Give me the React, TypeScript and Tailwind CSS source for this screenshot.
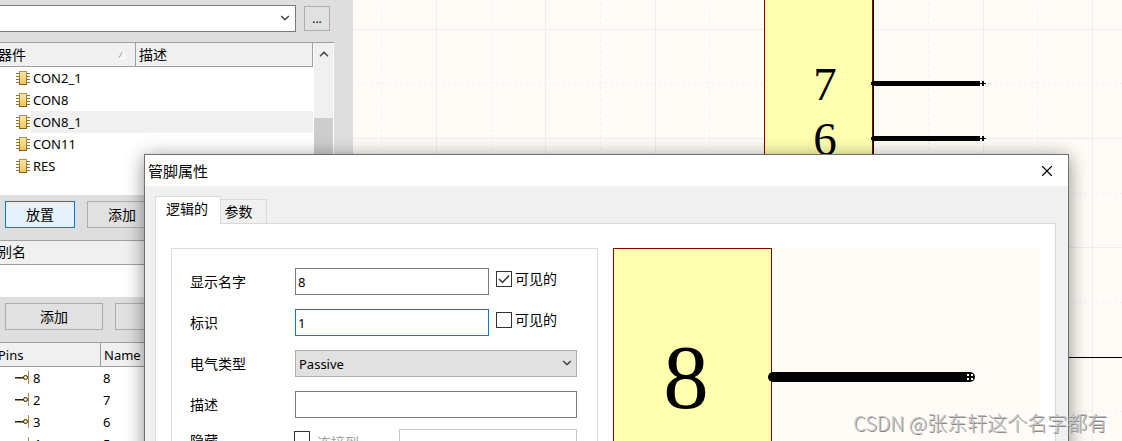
import { ChevronDown, ChevronUp, X } from "lucide-react"
import { ReactNode } from "react"

const components = ["CON2_1", "CON8", "CON8_1", "CON11", "RES"]

const pins = [
  { id: "8", name: "8" },
  { id: "2", name: "7" },
  { id: "3", name: "6" },
  { id: "4", name: "5" },
]

const solidX = [83, 192, 302, 411, 520, 630, 739]
const dashedX = [28, 138, 247, 356, 466, 575, 684]
const solidY = [29, 138, 247]
const dashedY = [83, 193, 302, 411]

function ChipIcon() {
  return (
    <svg width="14" height="14" viewBox="0 0 14 14" shapeRendering="crispEdges">
      <defs>
        <linearGradient id="chip" x1="0" y1="0" x2="0" y2="1">
          <stop offset="0" stopColor="#fbe5a9" />
          <stop offset="1" stopColor="#f3c65c" />
        </linearGradient>
        <linearGradient id="chipEdge" x1="0" y1="0" x2="0" y2="1">
          <stop offset="0" stopColor="#b0973a" />
          <stop offset="1" stopColor="#7f5f1c" />
        </linearGradient>
      </defs>
      {[2, 5, 8, 11].map((y) => (
        <path key={y} d={`M0 ${y}h3v1h-3zM11 ${y}h3v1h-3z`} fill="#8f7526" />
      ))}
      <rect x="3" y="0" width="8" height="14" fill="url(#chipEdge)" />
      <rect x="4" y="1" width="6" height="12" fill="url(#chip)" />
    </svg>
  )
}

function PinIcon() {
  return (
    <svg width="14" height="14" viewBox="0 0 14 14">
      <rect x="0" y="6" width="9" height="1" fill="#2b2118" />
      <rect x="0" y="7" width="9" height="1" fill="#a08a60" />
      <rect x="13" y="0" width="1" height="13" fill="#a58a48" />
      <circle cx="10.5" cy="6.5" r="2" fill="#ffe98a" stroke="#2b2118" />
    </svg>
  )
}

function PushButton({ children, className }: { children?: ReactNode; className: string }) {
  return (
    <button type="button" className={`h-[27px] shrink-0 border text-sm leading-5 ${className}`}>
      {children}
    </button>
  )
}

function CheckBox({ id, checked = false }: { id: string; checked?: boolean }) {
  return (
    <span className="relative size-4">
      <input
        id={id}
        type="checkbox"
        defaultChecked={checked}
        className="peer block size-4 appearance-none border border-[#333] bg-white"
      />
      <svg className="pointer-events-none absolute inset-0 hidden peer-checked:block" viewBox="0 0 16 16">
        <path d="M3 8l3.500 3.500L13 4.500" fill="none" stroke="#333" strokeWidth="1.500" />
      </svg>
    </span>
  )
}

function VisibleToggle({ id, checked }: { id: string; checked?: boolean }) {
  return (
    <div className="flex items-center gap-[3px] self-start pt-[3px]">
      <CheckBox id={id} checked={checked} />
      <label htmlFor={id} className="leading-4">可见的</label>
    </div>
  )
}

function Sidebar() {
  const th = "border-b border-[#a0a0a0] bg-[#f0f0f0] p-0 text-left font-normal"
  return (
    <aside className="w-[353px] shrink-0 bg-[#dedede] pt-[5px]">
      <div className="flex items-center gap-2">
        <div className="relative h-[27px] w-[296px]">
          <select aria-label="库" className="size-full appearance-none border border-l-0 border-[#7a7a7a] bg-white" />
          <ChevronDown className="pointer-events-none absolute top-1.5 right-1 size-3.5 text-[#333]" strokeWidth={2} />
        </div>
        <button type="button" className="h-[25px] w-[26px] border border-[#adadad] bg-[#e1e1e1] text-xs">
          ...
        </button>
      </div>

      {/* Component list */}
      <div className="mt-[10px] flex h-[153px] w-[334px] border-t border-[#a0a0a0] bg-white">
        <div className="flex-1">
          <table className="-ml-0.5 w-[315px] table-fixed border-separate border-spacing-0">
            <thead>
              <tr className="h-6">
                <th className={`w-[138px] border-r ${th}`}>
                  <div className="flex items-center justify-between pr-2">
                    器件
                    <svg width="9" height="8" viewBox="0 0 9 8">
                      <path d="M.5 7.500L4.500 .5" stroke="#a0a0a0" />
                      <path d="M4.500.5L8 7.500H0" fill="none" stroke="#fff" />
                    </svg>
                  </div>
                </th>
                <th className={`border-r ${th}`}>
                  <span className="pl-[3px]">描述</span>
                </th>
              </tr>
            </thead>
            <tbody>
              {components.map((name) => (
                <tr key={name} className="h-[22px] text-[13px]">
                  <td colSpan={2} className="p-0 pl-[18px]">
                    <div className="flex items-center gap-[1px]">
                      <ChipIcon />
                      <span className={`h-[22px] flex-1 pl-0.5 ${name === "CON8_1" ? "bg-[#f0f0f0]" : ""}`}>{name}</span>
                    </div>
                  </td>
                </tr>
              ))}
            </tbody>
          </table>
        </div>
        <div className="mr-px flex w-[19px] flex-col items-center bg-[#f0f0f0]">
          <ChevronUp className="my-1 size-3.5 text-[#505050]" strokeWidth={3} />
          <div className="mt-[53px] w-full flex-1 bg-[#cdcdcd]" />
        </div>
      </div>

      <div className="flex gap-3 px-[5px] pt-1.5 pb-3">
        <PushButton className="w-[70px] border-[#0078d7] bg-[#e5f1fb]">放置</PushButton>
        <PushButton className="w-[70px] border-[#adadad] bg-[#e1e1e1]">添加</PushButton>
      </div>

      {/* Aliases */}
      <div className="h-[57px] w-[334px] border-t border-[#a0a0a0] bg-white">
        <div className="h-6 border-b border-[#a0a0a0] bg-[#f0f0f0]">
          <h2 className="-ml-0.5">别名</h2>
        </div>
      </div>

      <div className="flex gap-3 px-[5px] pt-1.5 pb-3">
        <PushButton className="w-[98px] border-[#adadad] bg-[#e1e1e1]">添加</PushButton>
        <PushButton className="w-[98px] border-[#adadad] bg-[#e1e1e1]" />
      </div>

      {/* Pins */}
      <div className="h-[120px] w-[334px] border-t border-[#a0a0a0] bg-white">
        <table className="-ml-0.5 w-[336px] table-fixed border-separate border-spacing-0 text-[13px]">
          <thead>
            <tr className="h-6">
              <th className={`w-[103px] border-r ${th}`}>Pins</th>
              <th className={th}>
                <span className="pl-[3px]">Name</span>
              </th>
            </tr>
          </thead>
          <tbody>
            {pins.map((pin) => (
              <tr key={pin.id} className="h-[22px]">
                <td className="p-0 pl-[17px]">
                  <div className="flex items-center gap-1">
                    <PinIcon />
                    {pin.id}
                  </div>
                </td>
                <td className="p-0 pl-0.5">{pin.name}</td>
              </tr>
            ))}
          </tbody>
        </table>
      </div>
    </aside>
  )
}

function Schematic() {
  return (
    <main className="min-w-0 flex-1 bg-[#fffcf7]">
      <svg className="block size-full font-['Liberation_Serif',serif]" shapeRendering="crispEdges">
        <g fill="#eeeeeb">
          {solidX.map((x) => <rect key={x} x={x} y="0" width="1" height="100%" />)}
          {solidY.map((y) => <rect key={y} x="0" y={y} width="100%" height="1" />)}
        </g>
        <g stroke="#f1f0ed" strokeDasharray="3 3">
          {dashedX.map((x) => <line key={x} x1={x + 0.5} x2={x + 0.5} y1="3" y2="100%" />)}
          {dashedY.map((y) => <line key={y} x1="5" x2="100%" y1={y + 0.5} y2={y + 0.5} />)}
        </g>
        <rect x="411" y="-2" width="109" height="360" fill="#ffffb0" />
        <rect x="411" y="0" width="1" height="357" fill="#800000" />
        <rect x="519" y="0" width="1" height="357" fill="#800000" />
        <rect x="520" y="0" width="1" height="357" fill="#000" />
        <rect x="411" y="357" width="100%" height="1" fill="#000" />
        {[83, 138].map((y) => (
          <g key={y}>
            <rect x="519" y={y - 2} width="108" height="5" />
            <rect x="518" y={y - 1} width="1" height="3" />
            <rect x="627" y={y} width="6" height="1" />
            <rect x="629" y={y - 2} width="2" height="5" />
          </g>
        ))}
        <g fontSize="47" textAnchor="middle">
          <text x="472" y="100">7</text>
          <text x="472" y="155">6</text>
        </g>
      </svg>
    </main>
  )
}

function PinPreview() {
  return (
    <svg className="h-[230px] flex-1 bg-[#fffcf7] font-['Liberation_Serif',serif]">
      <rect x=".5" y=".5" width="158" height="240" fill="#ffffb0" stroke="#800000" />
      <text x="73" y="160" fontSize="91" textAnchor="middle">8</text>
      <path d="M160 129H357" stroke="#000" strokeWidth="10" strokeLinecap="round" />
      <path d="M354 126h2v2h-2zM358 126h2v2h-2zM354 130h2v2h-2zM358 130h2v2h-2z" fill="#fff" />
    </svg>
  )
}

function PinDialog() {
  const field = "h-[27px] border bg-white px-0.5 text-[13px] outline-none"
  return (
    <section
      role="dialog"
      aria-labelledby="dialog-title"
      className="absolute top-[154px] right-[53px] -bottom-9 left-36 flex flex-col border border-[#707070] bg-[#f0f0f0] shadow-[0_3px_18px_rgba(0,0,0,0.45)]"
    >
      <header className="flex h-[31px] shrink-0 items-center justify-between bg-white pr-3 pl-[3px]">
        <h1 id="dialog-title" className="text-[15px]">管脚属性</h1>
        <button type="button" aria-label="关闭">
          <X className="size-[18px]" strokeWidth={1.5} />
        </button>
      </header>

      <div className="flex flex-1 flex-col px-[10px] pr-3 pt-[10px]">
        <div role="tablist" className="flex items-end">
          <button
            type="button"
            role="tab"
            aria-selected="true"
            className="relative -mb-px h-7 w-[66px] border border-b-0 border-[#d9d9d9] bg-white pr-0.5 pb-1 text-sm"
          >
            逻辑的
          </button>
          <button
            type="button"
            role="tab"
            aria-selected="false"
            className="h-6 w-[46px] border border-b-0 border-l-0 border-[#d9d9d9] pr-2.5 text-sm"
          >
            参数
          </button>
        </div>

        <div className="flex flex-1 gap-[15px] border border-[#d9d9d9] bg-white px-[15px] pt-6">
          <form className="w-[427px] border border-[#dcdcdc] pt-[19px] pl-[18px] text-sm leading-5">
            <div className="grid grid-cols-[105px_282px] gap-y-[14px]">
              <label htmlFor="pin-name" className="self-center">显示名字</label>
              <div className="flex items-center gap-[7px]">
                <input id="pin-name" defaultValue="8" className={`w-[194px] border-[#7a7a7a] ${field}`} />
                <VisibleToggle id="name-visible" checked />
              </div>
              <label htmlFor="pin-id" className="self-center">标识</label>
              <div className="flex items-center gap-[7px]">
                <input id="pin-id" defaultValue="1" className={`w-[194px] border-[#0078d7] ${field}`} />
                <VisibleToggle id="id-visible" />
              </div>
              <label htmlFor="pin-type" className="self-center">电气类型</label>
              <div className="relative h-[27px]">
                <select id="pin-type" className="size-full appearance-none border border-[#adadad] bg-[#e1e1e1] px-[3px] text-[13px]">
                  <option>Passive</option>
                </select>
                <ChevronDown className="pointer-events-none absolute top-1.5 right-[3px] size-3.5 text-[#333]" strokeWidth={2} />
              </div>
              <label htmlFor="pin-desc" className="self-center">描述</label>
              <input id="pin-desc" className={`w-full border-[#7a7a7a] ${field}`} />
            </div>
            <div className="mt-[11px] grid grid-cols-[104px_23px_82px_178px]">
              <label htmlFor="pin-hide" className="pt-0.5">隐藏</label>
              <div className="pt-0.5">
                <CheckBox id="pin-hide" />
              </div>
              <label htmlFor="pin-net" className="self-center text-[#a0a0a0]">连接到</label>
              <input id="pin-net" className={`w-full border-[#c8c8c8] ${field}`} />
            </div>
          </form>
          <PinPreview />
        </div>
      </div>
    </section>
  )
}

export default function App() {
  return (
    <div className="relative flex h-screen overflow-hidden font-['Noto_Sans','Noto_Sans_CJK_SC',sans-serif] text-sm leading-[22px] text-black">
      <Sidebar />
      <Schematic />
      <PinDialog />
      <p className="absolute right-[15px] bottom-1 font-['Noto_Sans_CJK_SC',sans-serif] text-xl font-light text-[#c4c4c4] [text-shadow:1px_1px_0_#8a8a8a]">
        CSDN @张东轩这个名字都有
      </p>
    </div>
  )
}
